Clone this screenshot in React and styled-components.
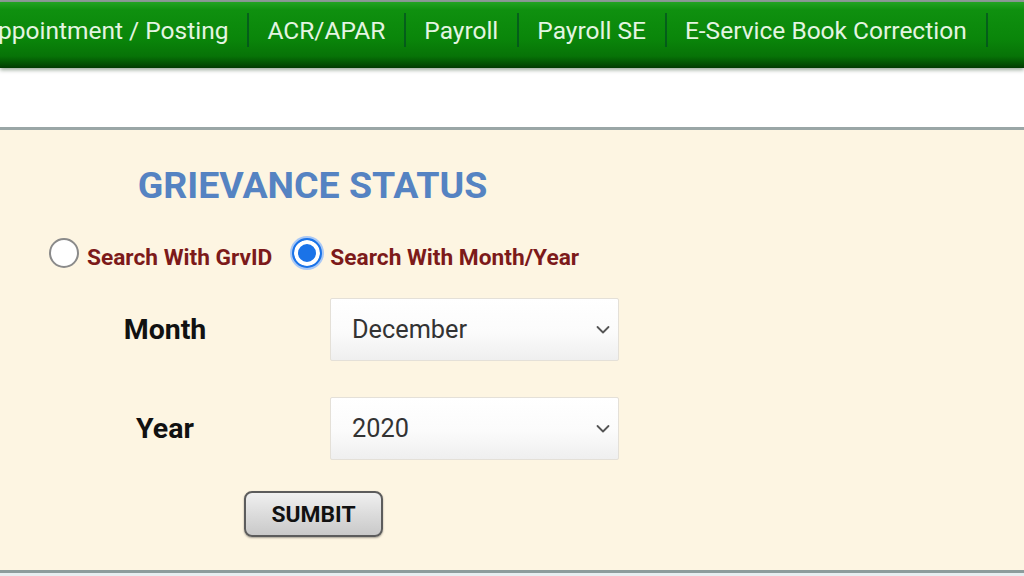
import React, { useState } from "react";
import styled, { createGlobalStyle, css } from "styled-components";

const GlobalStyle = createGlobalStyle`
  html, body {
    margin: 0;
    padding: 0;
    background: #ffffff;
    overflow: hidden;
  }
  body {
    font-family: Roboto, "Liberation Sans", Arial, sans-serif;
  }
`;

const Page = styled.div`
  width: 1024px;
  height: 576px;
  overflow: hidden;
  display: flex;
  flex-direction: column;
  background: #ffffff;
`;

const TopRule = styled.div`
  height: 2px;
  background: #8e9c98;
  flex-shrink: 0;
`;

const NavBar = styled.nav`
  height: 66px;
  flex-shrink: 0;
  display: flex;
  align-items: center;
  overflow: hidden;
  background: linear-gradient(
    to bottom,
    #22a422 0%,
    #0f900f 12%,
    #0a860a 55%,
    #077307 82%,
    #035003 94%,
    #023a02 100%
  );
  box-shadow: 0 2px 4px rgba(0, 40, 0, 0.4);
  position: relative;
  z-index: 1;
`;

const NavList = styled.ul`
  display: flex;
  align-items: center;
  height: 100%;
  box-sizing: border-box;
  margin: 0 0 0 -36px;
  padding: 0 0 10px;
  list-style: none;
`;

const NavItem = styled.li`
  display: flex;
  align-items: center;
  height: 34px;
  padding: 0 19px 0 18px;
  font-size: 24.5px;
  color: #e4f5e2;
  white-space: nowrap;
  border-right: 2px solid rgba(0, 60, 40, 0.55);
`;

const WhiteStrip = styled.div`
  height: 59px;
  flex-shrink: 0;
  background: #ffffff;
`;

const Rule = styled.div`
  height: 3px;
  flex-shrink: 0;
  background: ${({ tone }) => tone || "#9aa6a6"};
`;

const Panel = styled.section`
  flex: 1;
  background: #fdf5e2;
  display: flex;
  flex-direction: column;
  width: 100%;
`;

const FormBlock = styled.div`
  width: 625px;
  display: flex;
  flex-direction: column;
`;

const Title = styled.h2`
  margin: 33px 0 0;
  text-align: center;
  font-size: 37.5px;
  line-height: 44px;
  font-weight: 700;
  color: #5583c2;
`;

const RadioRow = styled.div`
  display: flex;
  align-items: center;
  gap: 20px;
  margin: 35px 0 0 49px;
`;

const RadioLabel = styled.label`
  display: flex;
  align-items: center;
  gap: 8px;
  font-size: 22.7px;
  font-weight: 700;
  color: #7c1a1a;
  cursor: pointer;
`;

const Radio = styled.input.attrs({ type: "radio" })`
  appearance: none;
  -webkit-appearance: none;
  margin: 0;
  width: 30px;
  height: 30px;
  border-radius: 50%;
  flex-shrink: 0;
  background: #ffffff;
  border: 2px solid #8a8a8a;
  position: relative;
  top: -4px;
  ${({ checked }) =>
    checked &&
    css`
      border: 2px solid #1a73e8;
      background: #1a73e8;
      box-shadow: inset 0 0 0 4px #ffffff, 0 0 0 2px #a9c8f5;
    `}
`;

const FieldGrid = styled.div`
  display: grid;
  grid-template-columns: 330px 289px;
  row-gap: 36px;
  margin-top: 26px;
`;

const FieldLabel = styled.div`
  display: flex;
  align-items: center;
  justify-content: center;
  font-size: 28.5px;
  font-weight: 700;
  color: #111111;
`;

const SelectWrap = styled.div`
  position: relative;
  height: 63px;
`;

const Select = styled.select`
  appearance: none;
  -webkit-appearance: none;
  width: 100%;
  height: 100%;
  margin: 0;
  padding: 0 40px 0 21px;
  font-family: Roboto, "Liberation Sans", Arial, sans-serif;
  font-size: 25.3px;
  color: #333333;
  border: 1px solid #e4e0d8;
  border-radius: 2px;
  background: linear-gradient(to bottom, #ffffff 0%, #fbfbfb 55%, #efefef 100%);
  outline: none;
`;

const Chevron = styled.svg`
  position: absolute;
  right: 9px;
  top: 50%;
  transform: translateY(-50%);
  pointer-events: none;
`;

const ButtonRow = styled.div`
  display: flex;
  justify-content: center;
  padding-left: 2px;
  margin-top: 31px;
`;

const SubmitButton = styled.button`
  width: 139px;
  height: 46px;
  border: 2px solid #5c5c5c;
  border-radius: 8px;
  background: linear-gradient(to bottom, #f0f0f0 0%, #dcdcdc 50%, #c9c9c9 100%);
  font-family: Roboto, "Liberation Sans", Arial, sans-serif;
  font-size: 22.8px;
  font-weight: 700;
  color: #111111;
  box-shadow: 0 1px 2px rgba(0, 0, 0, 0.35);
  cursor: pointer;
`;

const Spacer = styled.div`
  flex: 1;
`;

const menu = [
  "Appointment / Posting",
  "ACR/APAR",
  "Payroll",
  "Payroll SE",
  "E-Service Book Correction",
  "",
];

const months = [
  "January", "February", "March", "April", "May", "June",
  "July", "August", "September", "October", "November", "December",
];

const years = ["2018", "2019", "2020", "2021"];

const DownIcon = () => (
  <Chevron width="14" height="9" viewBox="0 0 14 9">
    <path d="M1.5 1.5 L7 7 L12.5 1.5" fill="none" stroke="#555" strokeWidth="1.8" strokeLinecap="round" strokeLinejoin="round" />
  </Chevron>
);

export default function App() {
  const [mode, setMode] = useState("month");
  const [month, setMonth] = useState("December");
  const [year, setYear] = useState("2020");

  return (
    <Page>
      <GlobalStyle />
      <TopRule />
      <NavBar>
        <NavList>
          {menu.map((m, i) => (
            <NavItem key={i}>{m}</NavItem>
          ))}
        </NavList>
      </NavBar>
      <WhiteStrip />
      <Rule />
      <Panel>
        <FormBlock>
          <Title>GRIEVANCE STATUS</Title>
          <RadioRow>
            <RadioLabel>
              <Radio name="mode" checked={mode === "id"} onChange={() => setMode("id")} />
              Search With GrvID
            </RadioLabel>
            <RadioLabel>
              <Radio name="mode" checked={mode === "month"} onChange={() => setMode("month")} />
              Search With Month/Year
            </RadioLabel>
          </RadioRow>
          <FieldGrid>
            <FieldLabel>Month</FieldLabel>
            <SelectWrap>
              <Select value={month} onChange={(e) => setMonth(e.target.value)}>
                {months.map((m) => (
                  <option key={m}>{m}</option>
                ))}
              </Select>
              <DownIcon />
            </SelectWrap>
            <FieldLabel>Year</FieldLabel>
            <SelectWrap>
              <Select value={year} onChange={(e) => setYear(e.target.value)}>
                {years.map((y) => (
                  <option key={y}>{y}</option>
                ))}
              </Select>
              <DownIcon />
            </SelectWrap>
          </FieldGrid>
          <ButtonRow>
            <SubmitButton type="button">SUMBIT</SubmitButton>
          </ButtonRow>
        </FormBlock>
        <Spacer />
      </Panel>
      <Rule tone="#8c9c9c" />
      <Rule tone="#e6eef0" />
    </Page>
  );
}
